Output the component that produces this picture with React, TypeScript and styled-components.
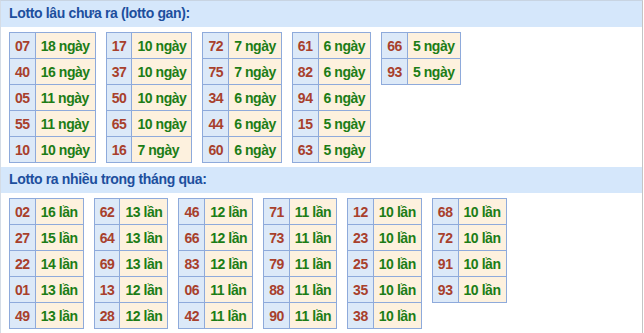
import React from "react";
import styled, { createGlobalStyle } from "styled-components";

const Global = createGlobalStyle`
  html, body { margin: 0; padding: 0; background: #fff; }
  body { font-family: "Liberation Sans", Arial, sans-serif; }
`;

const Page = styled.div`
  width: 643px;
  height: 333px;
  border-left: 1px solid #d4dce6;
  border-right: 1px solid #c4c4c4;
  border-top: 1px solid #c8d4e2;
  box-sizing: border-box;
  overflow: hidden;
`;

const Header = styled.div`
  height: 26px;
  line-height: 25px;
  background: #d5e7fb;
  color: #1d4f9e;
  font-size: 14px;
  font-weight: bold;
  letter-spacing: -0.35px;
  padding-left: 8px;
`;

const Tables = styled.div<{ $minH: number }>`
  display: flex;
  align-items: flex-start;
  gap: 10px;
  padding: 5px 8px 0;
  min-height: ${(p) => p.$minH}px;
`;

const Table = styled.table`
  border-collapse: collapse;
  font-size: 14px;
  font-weight: bold;
  letter-spacing: -0.45px;
`;

const NumCell = styled.td`
  border: 1px solid #8eaadb;
  background: #dce9f8;
  color: #a8402c;
  padding: 0 5px;
  height: 25px;
  text-align: center;
`;

const ValCell = styled.td`
  border: 1px solid #8eaadb;
  background: #fdf1de;
  color: #1c7d16;
  padding: 0 5px;
  height: 25px;
  white-space: nowrap;
`;

type Col = [string, number][];

const gan: Col[] = [
  [["07", 18], ["40", 16], ["05", 11], ["55", 11], ["10", 10]],
  [["17", 10], ["37", 10], ["50", 10], ["65", 10], ["16", 7]],
  [["72", 7], ["75", 7], ["34", 6], ["44", 6], ["60", 6]],
  [["61", 6], ["82", 6], ["94", 6], ["15", 5], ["63", 5]],
  [["66", 5], ["93", 5]],
];

const nhieu: Col[] = [
  [["02", 16], ["27", 15], ["22", 14], ["01", 13], ["49", 13]],
  [["62", 13], ["64", 13], ["69", 13], ["13", 12], ["28", 12]],
  [["46", 12], ["66", 12], ["83", 12], ["06", 11], ["42", 11]],
  [["71", 11], ["73", 11], ["79", 11], ["88", 11], ["90", 11]],
  [["12", 10], ["23", 10], ["25", 10], ["35", 10], ["38", 10]],
  [["68", 10], ["72", 10], ["91", 10], ["93", 10]],
];

function Block({ cols, unit, minH }: { cols: Col[]; unit: string; minH: number }) {
  return (
    <Tables $minH={minH}>
      {cols.map((col, i) => (
        <Table key={i}>
          <tbody>
            {col.map(([n, v]) => (
              <tr key={n}>
                <NumCell>{n}</NumCell>
                <ValCell>
                  {v} {unit}
                </ValCell>
              </tr>
            ))}
          </tbody>
        </Table>
      ))}
    </Tables>
  );
}

export default function App() {
  return (
    <>
      <Global />
      <Page>
        <Header>Lotto lâu chưa ra (lotto gan):</Header>
        <Block cols={gan} unit="ngày" minH={135} />
        <Header>Lotto ra nhiều trong tháng qua:</Header>
        <Block cols={nhieu} unit="lần" minH={135} />
      </Page>
    </>
  );
}
